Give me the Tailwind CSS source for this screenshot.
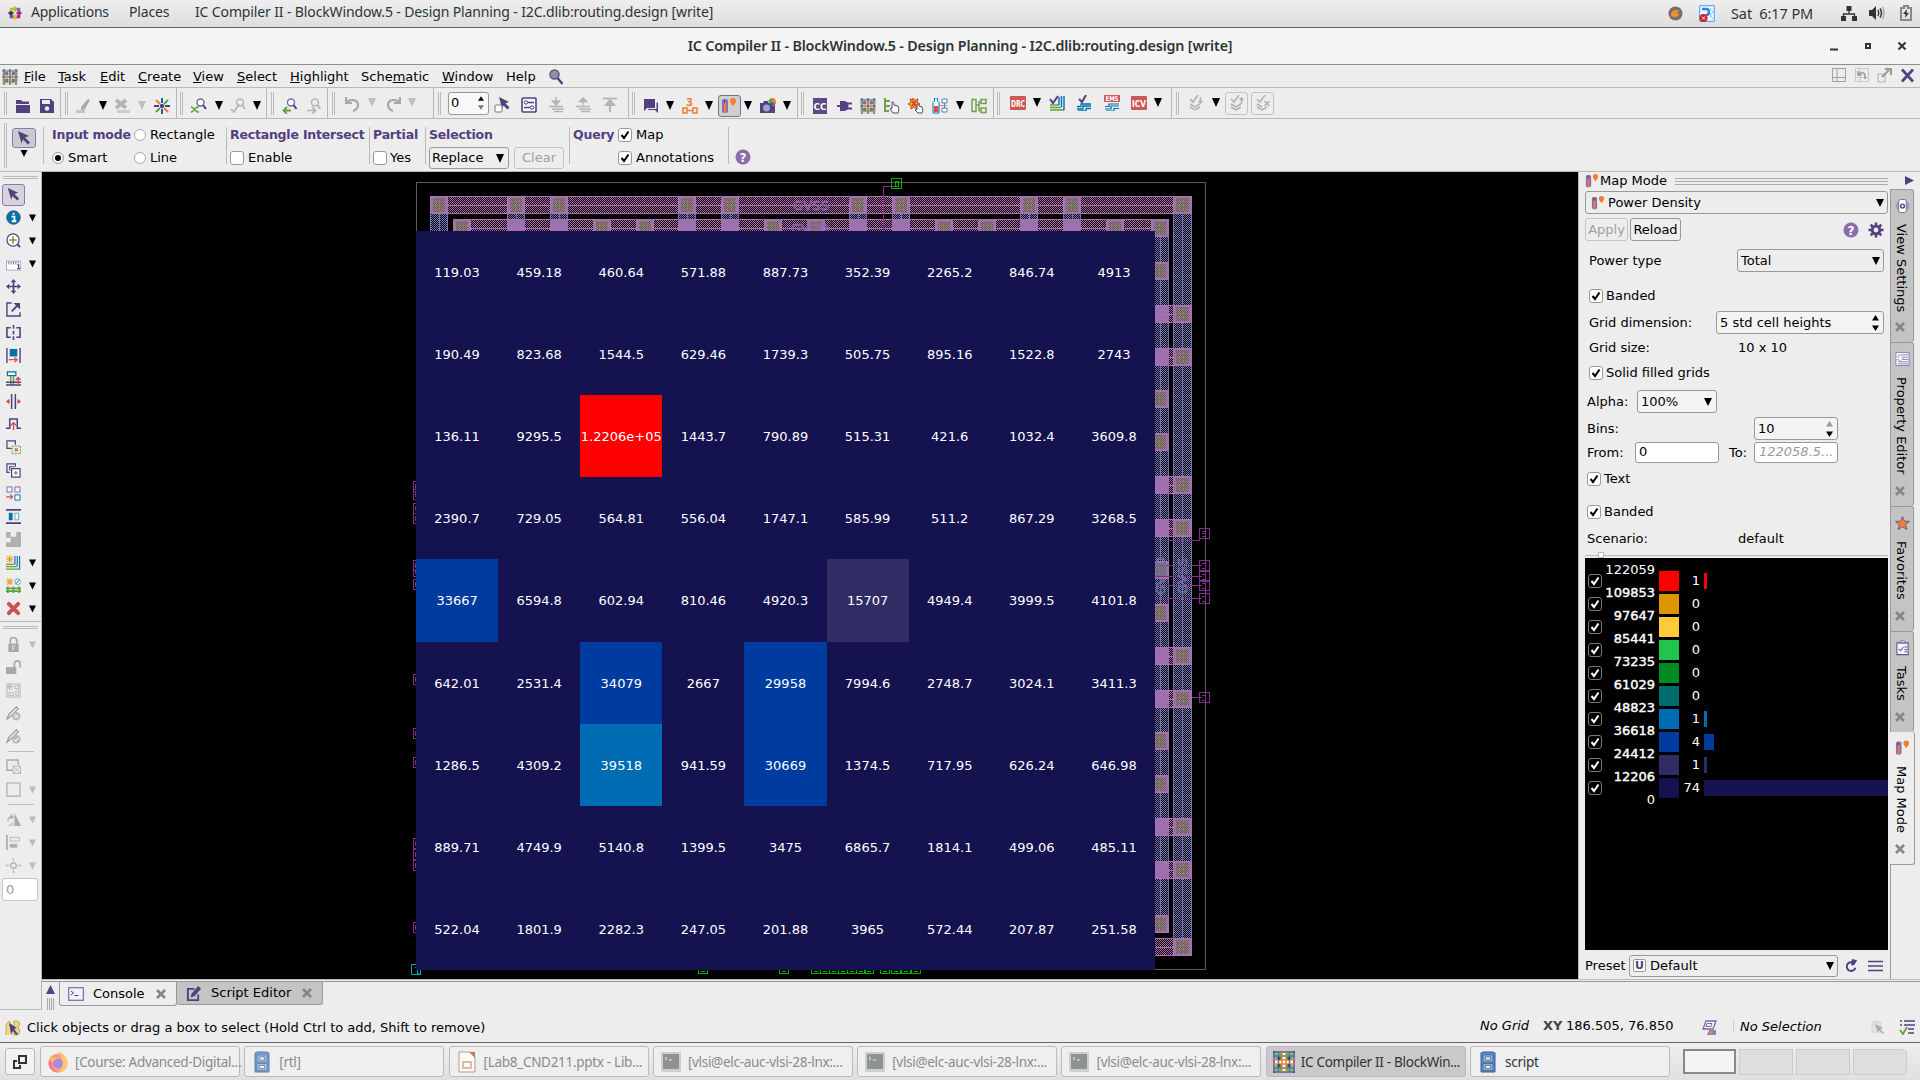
<!DOCTYPE html>
<html lang="en">
<head>
<meta charset="utf-8">
<title>IC Compiler II - BlockWindow.5</title>
<script src="https://cdn.jsdelivr.net/npm/@tailwindcss/browser@4"></script>
</head>
<body class="w-[1920px] h-[1080px] overflow-hidden bg-[#ededed] text-black text-[13px] leading-[16px] font-['DejaVu_Sans','Liberation_Sans',sans-serif] whitespace-nowrap">

<svg class="hidden">
  <symbol id="dn" viewBox="0 0 8 8"><path d="M0 0h8L4 8z" fill="currentColor"/></symbol>
  <symbol id="cursor" viewBox="0 0 16 16"><path d="M2 1l11 5-4 1.500 5 5-2 2-5-5-1.500 4z" fill="#53407f"/></symbol>
  <symbol id="folder" viewBox="0 0 16 16"><path d="M1 2h5l1.500 1.500H14V6H3L1 12z" fill="#53407f"/><path d="M1 7h14v8H1z" fill="#53407f"/><path d="M1 6.500h14" stroke="#ededed"/></symbol>
  <symbol id="save" viewBox="0 0 16 16"><path d="M1 1h11l3 3v11H1z" fill="#53407f"/><path d="M3 2h8v4H3z" fill="#ededed"/><circle cx="8" cy="10.500" r="2.300" fill="#ededed"/></symbol>
  <symbol id="pencil" viewBox="0 0 16 16"><path d="M5 9l7-8 2 1-5 9-4 2z" fill="#aaa"/><path d="M0 12h9v3H0z" fill="#c4c4c4"/></symbol>
  <symbol id="xgray" viewBox="0 0 16 16"><path d="M2 2l10 8M12 2L2 10" stroke="#b4b4b4" stroke-width="4"/><path d="M3 12h13v3H3z" fill="#ccc"/></symbol>
  <symbol id="burst" viewBox="0 0 16 16"><g stroke-width="2"><path d="M8 0v5M8 11v5" stroke="#0070b0"/><path d="M0 8h5M11 8h5" stroke="#53407f"/><path d="M2 2l4 4" stroke="#f08030"/><path d="M10 10l4 4" stroke="#f08030"/><path d="M14 2l-4 4M6 10l-4 4" stroke="#60a040"/></g><circle cx="8" cy="8" r="2.200" fill="#53407f"/></symbol>
  <symbol id="magg" viewBox="0 0 16 16"><circle cx="9.500" cy="4.500" r="3.500" fill="#fff" stroke="#7a68a0" stroke-width="1.400"/><path d="M12 7l3 4" stroke="#53407f" stroke-width="2"/><path d="M1 9l5 5M6 9l-5 5M0 8v2M0 13v2M7 8v2M7 13v2" stroke="#60a040" stroke-width="1.500"/></symbol>
  <symbol id="magx" viewBox="0 0 16 16"><circle cx="10" cy="4.500" r="3.500" fill="none" stroke="#b4b4b4" stroke-width="1.400"/><path d="M12 7l3 4M1 11l3 3 5-8" stroke="#b4b4b4" stroke-width="1.700" fill="none"/></symbol>
  <symbol id="magl" viewBox="0 0 16 16"><circle cx="9" cy="4.500" r="3.500" fill="#fff" stroke="#7a68a0" stroke-width="1.400"/><path d="M11.500 7l3 4" stroke="#53407f" stroke-width="2"/><path d="M2 12.500h7M5 9l-3.500 3.500L5 16" stroke="#60a040" stroke-width="1.800" fill="none"/></symbol>
  <symbol id="magr" viewBox="0 0 16 16"><circle cx="9" cy="4.500" r="3.500" fill="none" stroke="#b4b4b4" stroke-width="1.400"/><path d="M11.500 7l3 4M1 12.500h8M6 9l3.500 3.500L6 16" stroke="#b4b4b4" stroke-width="1.700" fill="none"/></symbol>
  <symbol id="undo" viewBox="0 0 16 16"><path d="M1 1v6h6M2 6c3-3 11-3 11 3 0 3-2 5-5 6" fill="none" stroke="#a8a8a8" stroke-width="2.200"/></symbol>
  <symbol id="redo" viewBox="0 0 16 16"><path d="M15 1v6H9M14 6C11 3 3 3 3 9c0 3 2 5 5 6" fill="none" stroke="#a8a8a8" stroke-width="2.200"/></symbol>
  <symbol id="selsq" viewBox="0 0 16 16"><path d="M5 0l10 5-3.500 1.500 4 4-2 2-4-4-1.500 3z" fill="#53407f"/><rect x="1" y="8" width="7" height="7" rx="1" fill="#fff" stroke="#777"/></symbol>
  <symbol id="sliders" viewBox="0 0 16 16"><rect x="1" y="1" width="14" height="14" rx="1" fill="#f6f4fa" stroke="#53407f" stroke-width="1.600"/><path d="M7 5.500h6M3 10.500h6" stroke="#53407f" stroke-width="1.500"/><circle cx="5" cy="5.500" r="1.700" fill="none" stroke="#53407f"/><circle cx="11" cy="10.500" r="1.700" fill="none" stroke="#53407f"/></symbol>
  <symbol id="lvd" viewBox="0 0 16 16"><path d="M8 0v5M4.500 4h7L8 8z" fill="#b4b4b4" stroke="#b4b4b4" stroke-width="1.500"/><path d="M1 9.500h14M4 12h12M6 14.500h9" stroke="#b4b4b4" stroke-width="1.600"/></symbol>
  <symbol id="lvu" viewBox="0 0 16 16"><path d="M8 8V3M4.500 4.500h7L8 1z" fill="#b4b4b4" stroke="#b4b4b4" stroke-width="1.500"/><path d="M1 9.500h14M4 12h12M6 14.500h9" stroke="#b4b4b4" stroke-width="1.600"/></symbol>
  <symbol id="lvt" viewBox="0 0 16 16"><path d="M8 15V6M4 8h8L8 3z" fill="#b4b4b4" stroke="#b4b4b4" stroke-width="2"/><path d="M1 1.500h14" stroke="#b4b4b4" stroke-width="1.800"/></symbol>
  <symbol id="chat" viewBox="0 0 16 16"><path d="M1 1h11v9H4l-3 3z" fill="#53407f"/><path d="M13.500 4.500H15V15l-3-3H5v-1h8.500z" fill="#53407f"/></symbol>
  <symbol id="three" viewBox="0 0 16 16"><text x="4" y="8" font-size="10" font-weight="bold" fill="#f08030">3</text><path d="M1 10h4v5H1zM11 10h4v5h-4zM5 12.500h6" fill="none" stroke="#f08030" stroke-width="1.500"/></symbol>
  <symbol id="map" viewBox="0 0 16 16"><rect x="1" y="1" width="6" height="14" rx="2" fill="#8a70b0"/><rect x="3" y="5" width="2" height="10" fill="#f08030"/><path d="M3.500 2v3" stroke="#53407f"/><path d="M12 0a3 3 0 0 1 3 3c0 2-3 5-3 5S9 5 9 3a3 3 0 0 1 3-3z" fill="#f08030"/></symbol>
  <symbol id="camera" viewBox="0 0 16 16"><path d="M0 5h3l1-2h4v2h7v10H0z" fill="#53407f"/><circle cx="6.500" cy="10" r="3.400" fill="#aaa0c4"/><path d="M12 0a4 4 0 0 1 0 8z" fill="#f08030"/><path d="M12 0a4 4 0 0 0-3 6l3-2z" fill="#60a040"/><path d="M9 6a4 4 0 0 0 6 0l-3-2z" fill="#0070b0"/></symbol>
  <symbol id="cc" viewBox="0 0 16 16"><path d="M1 0h14v16H1z" fill="#5b4a86"/><text x="1.500" y="12" font-size="9" font-weight="bold" fill="#fff" textLength="13" lengthAdjust="spacingAndGlyphs">CC</text></symbol>
  <symbol id="plug" viewBox="0 0 16 16"><path d="M1 8h4M10 5.500h6M10 10.500h6" stroke="#53407f" stroke-width="2"/><path d="M4 3h4c6 0 6 10 0 10H4z" fill="#53407f"/></symbol>
  <symbol id="chip" viewBox="0 0 16 16"><path d="M0 0h16v16H0z" fill="#e8d8c8"/><path d="M2 0v16M8 0v16M14 0v16" stroke="#3070a8" stroke-width="1.300"/><path d="M0 2h16M0 8h16" stroke="#3070a8"/><path d="M5 2v12M11 2v12M0 5h16M0 11h16" stroke="#e88030"/><path d="M3 13h10" stroke="#60a040"/><path d="M3 3h3v3H3zM10 3h3v3h-3zM3 10h3v3H3zM10 10h3v3h-3z" fill="#606070" opacity=".7"/></symbol>
  <symbol id="chipbig" viewBox="0 0 22 22"><path d="M0 0h22v22H0z" fill="#fff"/><path d="M1 0v22M21 0v22M0 1h22M0 21h22" stroke="#53407f" stroke-width="1.500"/><path d="M5.500 1v20M16.500 1v20M1 5h20M1 17h20" stroke="#1a78b8" stroke-width="1.500"/><path d="M9 1v20M13 1v20M1 9h20M1 13h20" stroke="#f08030" stroke-width="1.500"/><path d="M3 3h5v4H3zM14 3h5v4h-5zM3 15h5v4H3zM14 15h5v4h-5z" fill="none" stroke="#60a040" stroke-width="1.400"/><path d="M4.500 6h3v3h-3zM14.500 6h3v3h-3zM4.500 13h3v3h-3zM14.500 13h3v3h-3z" fill="#53407f"/></symbol>
  <symbol id="hand" viewBox="0 0 16 16"><path d="M1 0v14M1 3h5M1 8h5M1 13h4" stroke="#70a050" stroke-width="2" fill="none"/><path d="M8 4c1.500-.5 2 .5 2 3l4 1c1 2 1 5 0 7H9L6 11l2-.5z" fill="#fff" stroke="#53407f"/></symbol>
  <symbol id="bhand" viewBox="0 0 16 16"><path d="M5 0l1.500 2.500L10 1 9 4l3 2-3 1.500L9.500 11 6 9l-3 2 0-3.500L0 6l3-2L2 1l3 1z" fill="#f0b020" stroke="#d04020"/><path d="M4 3l4 5M8 3L4 8" stroke="#d04020" stroke-width="1.500"/><path d="M9 6c1.500-.5 2 .5 2 2l3 1c1 2 1 4 0 6h-4l-3-3 2-.5z" fill="#fff" stroke="#53407f"/></symbol>
  <symbol id="bottle" viewBox="0 0 16 16"><path d="M2.500 0h3v3l1.500 1.500V15H1V4.500L2.500 3z" fill="#fff" stroke="#0070b0"/><path d="M2 8h4.500v6H2z" fill="#d05050"/><path d="M10 1h5v4h-5zM10 10h5v4h-5zM12.500 5v5" fill="#fff" stroke="#3a8ac0"/><path d="M8 7.500h7" stroke="#f08030"/></symbol>
  <symbol id="gtree" viewBox="0 0 16 16"><path d="M1 1.500h4v12H1zM10 1.500h5v4h-5zM10 10h5v4.500h-5zM5 7h3M8 3.500h2M8 3.500v9h2" fill="none" stroke="#70a050" stroke-width="1.500"/></symbol>
  <symbol id="drc" viewBox="0 0 16 16"><rect x="0" y="1" width="16" height="14" rx="1" fill="#d05555"/><text x="1" y="11.500" font-size="8" font-weight="bold" fill="#fff" textLength="14" lengthAdjust="spacingAndGlyphs">DRC</text></symbol>
  <symbol id="icv" viewBox="0 0 16 16"><rect x="0" y="1" width="16" height="14" rx="1" fill="#d05555"/><text x="1" y="11.500" font-size="8" font-weight="bold" fill="#fff" textLength="14" lengthAdjust="spacingAndGlyphs">ICV</text></symbol>
  <symbol id="ems" viewBox="0 0 16 16"><rect x="0" y="0" width="16" height="7" rx="1" fill="#d05555"/><text x="1.500" y="6" font-size="6.500" font-weight="bold" fill="#fff" textLength="13" lengthAdjust="spacingAndGlyphs">EMS</text><path d="M1 14h6v-3h8M1 11.500h4V9h10M2 16h8v-2.500h5" fill="none" stroke="#0070b0" stroke-width="1.200"/></symbol>
  <symbol id="chk1" viewBox="0 0 16 16"><path d="M1 15h14M1 12.500h11M1 10h9" stroke="#60a040" stroke-width="1.400"/><path d="M15 1v14M12.500 1v11M10 2v8" stroke="#0070b0" stroke-width="1.400"/><path d="M1 4l3 4 5-7" fill="none" stroke="#53407f" stroke-width="2"/></symbol>
  <symbol id="chk2" viewBox="0 0 16 16"><path d="M1 14h6v-3h8M1 11.500h4V9h10M2 16h8v-2.500h5" fill="none" stroke="#0070b0" stroke-width="1.300"/><path d="M3 4l3 3 4-7" fill="none" stroke="#53407f" stroke-width="2"/></symbol>
  <symbol id="chkd" viewBox="0 0 16 16"><path d="M2 4l3 3 5-7M12.500 2v6M10.500 6l2 2 2-2M2 9l5 3 5-3M2 12l5 3 5-3" fill="none" stroke="#b0b0b0" stroke-width="1.500"/></symbol>
  <symbol id="chku" viewBox="0 0 16 16"><path d="M2 4l3 3 5-7M12.500 9V3M10.500 5l2-2 2 2M2 9l5 3 5-3M2 12l5 3 5-3" fill="none" stroke="#b0b0b0" stroke-width="1.500"/></symbol>
  <symbol id="chkx" viewBox="0 0 16 16"><path d="M2 4l3 3 5-7M9.500 6l5 5M14.500 6l-5 5M2 9l5 3M2 12l5 3 5-3" fill="none" stroke="#b0b0b0" stroke-width="1.500"/></symbol>
  <symbol id="help" viewBox="0 0 16 16"><circle cx="8" cy="8" r="7.500" fill="#8a6cab"/><text x="8" y="12.500" font-size="12" font-weight="bold" fill="#fff" text-anchor="middle">?</text></symbol>
  <symbol id="mag" viewBox="0 0 16 16"><circle cx="6.500" cy="5.500" r="4.500" fill="#9090a0" stroke="#655590" stroke-width="1.500"/><path d="M9.500 9l5 6" stroke="#53407f" stroke-width="2.400"/></symbol>
  <symbol id="close" viewBox="0 0 10 10"><path d="M1 1l8 8M9 1L1 9" stroke="#858585" stroke-width="2.600"/></symbol>

  <symbol id="info" viewBox="0 0 16 16"><circle cx="8" cy="8" r="7.300" fill="#0070a8" stroke="#53407f" stroke-width=".8"/><path d="M6 7h3v5M6 12h5M7 4h2" stroke="#fff" stroke-width="2" fill="none"/></symbol>
  <symbol id="zoom" viewBox="0 0 16 16"><circle cx="7.500" cy="7.500" r="6.500" fill="#fff" stroke="#53407f" stroke-width="1.300"/><path d="M7.500 3.500v8M3.500 7.500h8" stroke="#60a040" stroke-width="1.600"/><path d="M12 12l3 3" stroke="#53407f" stroke-width="2"/></symbol>
  <symbol id="ruler" viewBox="0 0 16 16"><rect x=".5" y="5.500" width="15" height="9.500" fill="#fff" stroke="#b0a4c4"/><path d="M3 6v3M5.500 6v3M8 6v3M10.500 6v3M13 6v2" stroke="#53407f" stroke-width=".8"/><path d="M12 9.500h1.500v4M12 13.500h3" stroke="#53407f" stroke-width="1.200" fill="none"/></symbol>
  <symbol id="move" viewBox="0 0 16 16"><path d="M8 2v12M2 8h12" stroke="#53407f" stroke-width="1.800"/><path d="M8 0l3 3.500H5zM8 16l3-3.500H5zM0 8l3.500-3v6zM16 8l-3.500-3v6z" fill="#53407f"/></symbol>
  <symbol id="resize" viewBox="0 0 16 16"><path d="M6 1H1v14h14v-4" fill="none" stroke="#53407f" stroke-width="1.500"/><path d="M6 10l6-6" stroke="#53407f" stroke-width="2"/><path d="M8 1h7v7z" fill="#53407f"/></symbol>
  <symbol id="mirror" viewBox="0 0 16 16"><path d="M5 3H1v10h4M11 3h4v10h-4" fill="none" stroke="#53407f" stroke-width="1.700"/><path d="M8 0v4M8 6v4M8 12v4" stroke="#53407f" stroke-width="1.700"/></symbol>
  <symbol id="snap" viewBox="0 0 16 16"><path d="M1 0v16M15 0v16" stroke="#53407f" stroke-width="1.500"/><path d="M4 1h8v8H4z" fill="#0070a8"/><path d="M3 12.500h9M9 10l3 2.500L9 15" fill="none" stroke="#d05050" stroke-width="1.300"/></symbol>
  <symbol id="via" viewBox="0 0 16 16"><path d="M1.500 1h9v4h-9z" fill="#fff" stroke="#0070a8" stroke-width="1.300"/><path d="M5 5v10M8 5v10" stroke="#60a040" stroke-width="1.600"/><path d="M0 12h16M0 15h16" stroke="#53407f" stroke-width="1.500"/><path d="M13 14V7M10.500 9.500L13 7l2.500 2.500" fill="none" stroke="#d05050" stroke-width="1.500"/></symbol>
  <symbol id="split" viewBox="0 0 16 16"><path d="M6 0v16M10 0v16" stroke="#53407f" stroke-width="1.600"/><path d="M4 8H1M12 8h3" stroke="#d05050" stroke-width="1.600"/><path d="M0 8l3.500-3v6zM16 8l-3.500-3v6z" fill="#d05050"/></symbol>
  <symbol id="jog" viewBox="0 0 16 16"><path d="M0 12h4V2h8v10h4" fill="none" stroke="#53407f" stroke-width="1.600"/><path d="M8 14V7M5 9l3-3 3 3" fill="none" stroke="#d05050" stroke-width="1.400"/></symbol>
  <symbol id="copyx" viewBox="0 0 16 16"><path d="M6 9H1V1h9v4" fill="none" stroke="#53407f" stroke-width="1.300"/><path d="M6.500 6.500h9v8h-9z" fill="none" stroke="#60a040" stroke-dasharray="2 1"/><path d="M9.500 9l3 3M12.500 9l-3 3" stroke="#d05050" stroke-width="1.200"/></symbol>
  <symbol id="copyp" viewBox="0 0 16 16"><path d="M4 10H1V1h9v3" fill="none" stroke="#53407f" stroke-width="1.300"/><path d="M6 6h9v9H6zM4 8V4h5" fill="#fff" stroke="#53407f" stroke-width="1.300"/><path d="M10.500 8.500v4M8.500 10.500h4" stroke="#60a040" stroke-width="1.300"/></symbol>
  <symbol id="spread" viewBox="0 0 16 16"><path d="M1 1h5.500v5.500H1zM9.500 1H15v5.500H9.500z" fill="#f6f4fa" stroke="#7a68a0"/><path d="M9.500 9.500H15V15H9.500z" fill="#fff" stroke="#0070a8"/><path d="M0 11.500h7M4.500 9L7 11.500 4.500 14" fill="none" stroke="#d05050" stroke-width="1.300"/></symbol>
  <symbol id="dist" viewBox="0 0 16 16"><path d="M0 1h16M0 15h16" stroke="#53407f" stroke-width="1.800"/><path d="M3 4h4v8H3z" fill="#0070a8"/><path d="M9.500 4.500h4v7h-4z" fill="#fff" stroke="#5aa0c8"/></symbol>
  <symbol id="poly" viewBox="0 0 16 16"><path d="M0 0h5v5h6V0h5v16H0v-5h5V6H0z" fill="#b0b0b0"/></symbol>
  <symbol id="newl" viewBox="0 0 16 16"><path d="M0 15h15M0 12.500h12M0 10h9" stroke="#60a040" stroke-width="1.300"/><path d="M14.500 1v14M12 1v11M9.500 1v9" stroke="#0070a8" stroke-width="1.200"/><path d="M4 0v9M0 4.500h8M1 1.500l6 6M7 1.500l-6 6" stroke="#f0a030" stroke-width="1.100"/></symbol>
  <symbol id="newr" viewBox="0 0 16 16"><path d="M0 11h16M0 14h16M2 9v7M8 9v7M14 9v7" stroke="#60a040" stroke-width="1.800"/><path d="M4 0v8M0 4h8M1 1l6 6M7 1L1 7" stroke="#f0a030" stroke-width="1.100"/><circle cx="12.500" cy="4" r="3" fill="#fff" stroke="#5aa0c8"/><path d="M11 6l3-4" stroke="#0070a8"/></symbol>
  <symbol id="del" viewBox="0 0 16 16"><path d="M3 3l10 10M13 3L3 13" stroke="#d05050" stroke-width="4.200" stroke-linecap="round"/></symbol>
  <symbol id="lock" viewBox="0 0 16 16"><path d="M4.500 7V4a3.500 3.500 0 0 1 7 0v3" fill="none" stroke="#a8a8a8" stroke-width="1.800"/><path d="M2.500 7h11v9h-11z" fill="#a8a8a8"/><path d="M7 14V9.500h3M7 12h2.500" stroke="#e0e0e0" fill="none"/></symbol>
  <symbol id="unlock" viewBox="0 0 16 16"><path d="M9 8V4a3 3 0 0 1 6 0v4" fill="none" stroke="#a8a8a8" stroke-width="1.800"/><path d="M0 7.500h11V15H0z" fill="#a8a8a8"/></symbol>
  <symbol id="plan" viewBox="0 0 16 16"><path d="M1 1h14v14H1z" fill="none" stroke="#b8b8b8"/><path d="M9.500 3h4v3h-4zM10.500 8.500h3v5h-3zM3 10.500h5v3H3zM4 0v8M0 4h8M1 1l6 6M7 1L1 7" fill="none" stroke="#b8b8b8"/></symbol>
  <symbol id="penx" viewBox="0 0 16 16"><path d="M1 14l2-5 8-8 2 2-8 8z" fill="#e8e8e8" stroke="#9a9a9a" stroke-width="1.300"/><circle cx="11" cy="11" r="4.500" fill="#b8b8b8"/><path d="M9 9l4 4M13 9l-4 4" stroke="#f0f0f0" stroke-width="1.300"/></symbol>
  <symbol id="penc" viewBox="0 0 16 16"><path d="M1 14l2-5 8-8 2 2-8 8z" fill="#e8e8e8" stroke="#9a9a9a" stroke-width="1.300"/><circle cx="11" cy="11" r="4.500" fill="#b8b8b8"/><path d="M8.500 11l2 2 3-4" stroke="#f0f0f0" stroke-width="1.300" fill="none"/></symbol>
  <symbol id="sqx" viewBox="0 0 16 16"><path d="M7 12H1V1h12v5" fill="none" stroke="#aaa" stroke-width="1.500"/><path d="M7.500 7.500h8v8h-8zM7.500 7.500l8 8M15.500 7.500l-8 8" fill="none" stroke="#b4b4b4"/></symbol>
  <symbol id="sq" viewBox="0 0 16 16"><path d="M1 1h14v14H1z" fill="none" stroke="#aaa" stroke-width="1.200"/></symbol>
  <symbol id="rot" viewBox="0 0 16 16"><path d="M9 1v14h7z" fill="#aaa"/><path d="M8 10v5H1z" fill="#d0d0d0"/><path d="M2 10c0-4 2-5 5-5M5 2.500L7.500 5 5 7.500" fill="none" stroke="#aaa" stroke-width="1.300"/></symbol>
  <symbol id="align" viewBox="0 0 16 16"><path d="M1 0v16" stroke="#aaa" stroke-width="1.800"/><path d="M4.500 2.500h10v4h-10z" fill="none" stroke="#b8b8b8"/><path d="M4 9.500h8v4H4z" fill="#b0b0b0"/></symbol>
  <symbol id="origin" viewBox="0 0 16 16"><circle cx="8" cy="8" r="3" fill="none" stroke="#b4b4b4" stroke-width="1.500"/><path d="M8 0v3M8 13v3M0 8h3M13 8h3" stroke="#b8b8b8" stroke-width="1.500"/></symbol>

  <symbol id="gear" viewBox="0 0 16 16"><path d="M8 .5v15M.5 8h15M2.700 2.700l10.600 10.600M13.300 2.700L2.700 13.300" stroke="#53407f" stroke-width="2.600"/><circle cx="8" cy="8" r="5.200" fill="#53407f"/><circle cx="8" cy="8" r="2.400" fill="#ededed"/></symbol>
  <symbol id="eye" viewBox="0 0 16 16"><ellipse cx="8" cy="8" rx="7.500" ry="6" fill="#a0a0b0"/><rect x="4" y="1" width="8" height="14" rx="2" fill="#fff" stroke="#7a68a0"/><circle cx="8" cy="8" r="2" fill="none" stroke="#53407f" stroke-width="1.500"/></symbol>
  <symbol id="prop" viewBox="0 0 16 16"><path d="M1 1h14v14H1z" fill="#fff" stroke="#8a7ab0"/><path d="M6 3.500h8M8 6h6M8 8.500h6M4 11h10M3 13.200h11" stroke="#8a7ab0"/><path d="M0 6h4V3l5 4.500L4 11V8.500H0z" fill="#fff" stroke="#8a7ab0" stroke-width=".7"/></symbol>
  <symbol id="star" viewBox="0 0 16 16"><path d="M8 1l2 5 5.500.3-4.200 3.500 1.500 5.200L8 12l-4.800 3 1.500-5.200L.5 6.300 6 6z" fill="#f08030" stroke="#6a5490"/></symbol>
  <symbol id="task" viewBox="0 0 16 16"><path d="M2 2.500h12v12.500H2z" fill="#f6f4fa" stroke="#6a5490" stroke-width="1.200"/><path d="M5 2.500c0-3 6-3 6 0z" fill="#fff" stroke="#6a5490"/><path d="M4 9l2 2 3-4M10 7h3M10 9.500h3M10 12h3" fill="none" stroke="#6a5490" stroke-width="1.100"/></symbol>
  <symbol id="reload" viewBox="0 0 16 16"><path d="M11 4.500A5 5 0 1 0 13 10" fill="none" stroke="#53407f" stroke-width="2.200"/><path d="M9 0l6 1.500L11.500 7H8z" fill="#53407f"/></symbol>
  <symbol id="term" viewBox="0 0 16 16"><rect x=".7" y="1.700" width="14.600" height="12.600" fill="#f2f0f8" stroke="#7a68a0" stroke-width="1.200"/><path d="M3 5l2.500 2L3 9M6.500 9.500h4" fill="none" stroke="#53407f"/></symbol>
  <symbol id="edit" viewBox="0 0 16 16"><path d="M9 3H2v12h11V9" fill="none" stroke="#53407f" stroke-width="2"/><path d="M5 12l1-4 7-8 3 3-7 8z" fill="#53407f"/></symbol>
  <symbol id="xterm" viewBox="0 0 22 22"><rect x="1" y="1" width="20" height="20" rx="1" fill="#c4c8c4"/><rect x="3" y="3" width="16" height="15" fill="#777c79"/><path d="M5 6l2 1.500L5 9M9 9h3" stroke="#eee" fill="none"/></symbol>
  <symbol id="cab" viewBox="0 0 22 22"><path d="M4 2l2-1h10l2 1v19H4z" fill="#5a8cc8" stroke="#36609c"/><path d="M6 4h10v7H6zM6 12.500h10v7H6z" fill="#8ab4e4" stroke="#36609c" stroke-width=".7"/><path d="M8.500 6h5v3h-5zM8.500 14.500h5v3h-5z" fill="#f2f2f2" stroke="#555" stroke-width=".7"/></symbol>
  <symbol id="ff" viewBox="0 0 22 22"><circle cx="11" cy="12" r="9.500" fill="#ff8a5a"/><path d="M2 9a9.500 9.500 0 0 0 9 12.500c-3-2-7-4-6-11z" fill="#ff5a7a"/><path d="M11 0c6 3 10 7 9.500 13C20 18 16 21 11 21 16 19 18 10 11 0z" fill="#ffc04a"/><circle cx="11" cy="12.500" r="4.800" fill="#9070e0"/><path d="M3 5c2 2 5 1 7 3-3 0-4 2-5 4z" fill="#ffb050"/></symbol>
  <symbol id="impress" viewBox="0 0 22 22"><path d="M3 1h11l5 5v15H3z" fill="#fff" stroke="#b08070"/><path d="M13 1h6v6z" fill="#b06040"/><path d="M6 10h10v8H6z" fill="#e8a890"/><path d="M8 12h6v4H8z" fill="#fff"/></symbol>
</svg>

<div class="flex flex-col w-[1920px] h-[1080px]">
  <!-- desktop top bar -->
  <header class="h-7 shrink-0 flex items-center bg-linear-to-b from-[#eeeeee] to-[#dedede] border-b border-[#666] text-[#2e3436] text-[14px] font-['Noto_Sans',sans-serif]">
    <svg class="w-[14px] h-[14px] ml-2 mb-px shrink-0" viewBox="0 0 16 16"><path d="M8 0l3 3-3 4-3-4z" fill="#9c3"/><path d="M16 8l-3 3-4-3 4-3z" fill="#93307a"/><path d="M8 16l-3-3 3-4 3 4z" fill="#eb2"/><path d="M0 8l3-3 4 3-4 3z" fill="#336"/><path d="M2 2h4v4H2z" fill="#ea4"/><path d="M10 2h4v4h-4z" fill="#86a"/><path d="M2 10h4v4H2z" fill="#55a"/><path d="M10 10h4v4h-4z" fill="#a36"/></svg>
    <span class="w-[98px] ml-[9px] pb-[3px] tracking-[-0.22px]">Applications</span>
    <span class="w-[66px] pb-[3px] tracking-[-0.15px]">Places</span>
    <span class="w-[1480px] pb-[3px] tracking-[-0.13px]">IC Compiler II - BlockWindow.5 - Design Planning - I2C.dlib:routing.design [write]</span>
    <span class="flex items-center absolute left-[1668px] top-0 h-[26px]">
      <svg class="w-[15px] h-[15px]" viewBox="0 0 16 16"><circle cx="8" cy="8" r="7.500" fill="#77706a"/><path d="M3 9c1-5 7-6 9-3-2 0-3 1-3 2h3c0 3-5 5-8 3z" fill="#f09030"/></svg>
      <svg class="w-4 h-[17px] ml-4" viewBox="0 0 16 17"><path d="M.7.700h14.600v15.600H.7z" fill="#eef6ff" stroke="#4a9cf0"/><path d="M3 4h4c4 0 4 6 0 6" fill="none" stroke="#2a88e8" stroke-width="2.500"/><path d="M11 3l3 4-3 3 3 4" fill="none" stroke="#8bc0f4"/><circle cx="4.500" cy="13" r="4" fill="#d02020"/><path d="M3 11.500l3 3M6 11.500l-3 3" stroke="#fff"/></svg>
      <span class="ml-4 w-[110px] pb-px text-[14.500px] tracking-[-0.1px] whitespace-pre">Sat  6:17 PM</span>
      <svg class="w-4 h-4 shrink-0" viewBox="0 0 16 16" fill="#2e3436"><path d="M5.500 1h5v5h-5zM0 11h5v5H0zM11 11h5v5h-5z"/><path d="M8 5v4M2.500 12V9h11v3" fill="none" stroke="#2e3436" stroke-width="1.300"/></svg>
      <svg class="w-4 h-4 shrink-0 ml-3" viewBox="0 0 16 16"><path d="M0 5h3l4-4v14l-4-4H0z" fill="#2e3436"/><path d="M9 5c1 2 1 4 0 6M11 3.500c2 3 2 6 0 9" fill="none" stroke="#2e3436" stroke-width="1.500"/><path d="M13.500 2c2 4 2 8 0 12" fill="none" stroke="#aaa" stroke-width="1.500"/></svg>
      <svg class="w-3 h-4 shrink-0 ml-[15px]" viewBox="0 0 12 16"><path d="M1 3h3V1h4v2h3v12H1z" fill="none" stroke="#888" stroke-width="2"/><path d="M7 4L3 9h2.500L5 13l4-5H6.500z" fill="#2e3436"/></svg>
    </span>
  </header>

  <!-- window title -->
  <div class="h-[37px] shrink-0 relative flex items-center justify-center bg-[#f4f4f4] border-b border-[#8f9088] text-[#2e3436] font-semibold text-[14.300px] tracking-[-0.17px] font-['Noto_Sans',sans-serif]">
    <span class="pb-px">IC Compiler II - BlockWindow.5 - Design Planning - I2C.dlib:routing.design [write]</span>
    <svg class="absolute left-[1828px] top-[10px] w-20 h-4" viewBox="0 0 80 16"><path d="M2 11.500h8" stroke="#2e3436" stroke-width="2"/><path d="M38 6h4v4h-4z" fill="none" stroke="#2e3436" stroke-width="2"/><path d="M70.500 4.500l7 7M77.500 4.500l-7 7" stroke="#2e3436" stroke-width="2"/></svg>
  </div>

  <!-- menu bar -->
  <nav class="h-[23px] shrink-0 relative flex items-center border-b border-[#b8b8b8] pt-px">
    <svg class="w-4 h-4 ml-[2px] mr-[6px]"><use href="#chip"/></svg>
    <span class="w-[34px]"><u>F</u>ile</span><span class="w-[42px]"><u>T</u>ask</span><span class="w-[38px]"><u>E</u>dit</span><span class="w-[55px]"><u>C</u>reate</span><span class="w-[44px]"><u>V</u>iew</span><span class="w-[53px]"><u>S</u>elect</span><span class="w-[71px]"><u>H</u>ighlight</span><span class="w-[81px]">Sche<u>m</u>atic</span><span class="w-[64px]"><u>W</u>indow</span><span class="w-[42px]">Help</span>
    <svg class="w-4 h-4"><use href="#mag"/></svg>
    <svg class="absolute left-[1832px] top-[3px] w-[84px] h-[15px]" viewBox="0 0 84 15"><path d="M.5.500h13v13H.5zM5 .5v13M.5 9.500h13" fill="none" stroke="#a0a0a0"/><path d="M23.500.500h13v13h-13zM28 .5v13M23.500 9.500h13" fill="none" stroke="#c8c8c8"/><path d="M26 3v4h4M27 6c3-3 7-1 6 5" fill="none" stroke="#999" stroke-width="1.600"/><path d="M46 6h7v8h-7z" fill="none" stroke="#b0b0b0"/><path d="M50 9l7-7M53 1h6v6" fill="none" stroke="#999" stroke-width="2"/><path d="M70 1.500l11 12M81 1.500l-11 12" stroke="#53407f" stroke-width="2.700"/></svg>
  </nav>

  <!-- icon toolbar, filled from data -->
  <div id="tools" class="h-[31px] shrink-0 flex items-center border-b border-[#b8b8b8]"></div>

  <!-- selection options -->
  <div class="h-[53px] shrink-0 flex items-start border-b border-[#b8b8b8]">
    <div class="ml-1 mt-1 h-[45px] w-[3px] border-x border-[#bbb]"></div>
    <div class="ml-[5px] mt-[9px] flex flex-col items-center w-6">
      <span class="w-6 h-5 rounded-[3px] border border-[#8a7ab0] bg-[#c8cccf] flex items-center justify-center"><svg class="w-4 h-4"><use href="#cursor"/></svg></span>
      <svg class="w-2 h-[7px] mt-[2px]"><use href="#dn"/></svg>
    </div>
    <div class="ml-[7px] mt-2 w-px h-[37px] bg-[#bbb]"></div>
    <div class="ml-2 mt-2 w-[82px] flex flex-col gap-[7px]">
      <b class="text-[#53407f] text-[12.500px] tracking-[-0.2px]">Input mode</b>
      <span class="flex items-center gap-1"><i class="w-3 h-3 rounded-full border border-[#999] bg-white flex items-center justify-center"><i class="w-[6px] h-[6px] rounded-full bg-black"></i></i>Smart</span>
    </div>
    <div class="mt-2 w-[92px] flex flex-col gap-[7px]">
      <span class="flex items-center gap-1"><i class="w-3 h-3 rounded-full border border-[#aaa] bg-white"></i>Rectangle</span>
      <span class="flex items-center gap-1"><i class="w-3 h-3 rounded-full border border-[#aaa] bg-white"></i>Line</span>
    </div>
    <div class="mt-2 w-px h-[37px] bg-[#bbb]"></div>
    <div class="ml-[3px] mt-2 w-[139px] flex flex-col gap-[7px]">
      <b class="text-[#53407f] text-[12.500px] tracking-[-0.2px]">Rectangle Intersect</b>
      <span class="flex items-center gap-1"><i class="w-[14px] h-[14px] rounded-[3px] border border-[#999] bg-white"></i>Enable</span>
    </div>
    <div class="mt-2 w-px h-[37px] bg-[#bbb]"></div>
    <div class="ml-[3px] mt-2 w-[52px] flex flex-col gap-[7px]">
      <b class="text-[#53407f] text-[12.500px] tracking-[-0.2px]">Partial</b>
      <span class="flex items-center gap-[3px]"><i class="w-[14px] h-[14px] rounded-[3px] border border-[#999] bg-white"></i>Yes</span>
    </div>
    <div class="mt-2 w-px h-[37px] bg-[#bbb]"></div>
    <div class="ml-[3px] mt-2 w-[140px] flex flex-col gap-1">
      <b class="text-[#53407f] text-[12.500px] tracking-[-0.2px]">Selection</b>
      <span class="flex gap-[5px]"><span class="w-[80px] h-[22px] rounded-[3px] border border-[#999] flex items-center justify-between pl-[2px] pr-1">Replace<svg class="w-2 h-[9px]" viewBox="0 0 8 8" preserveAspectRatio="none"><path d="M0 0h8L4 8z"/></svg></span><span class="w-[50px] h-[22px] rounded-[3px] border border-[#c4c4c4] flex items-center justify-center text-[#a0a0a0]">Clear</span></span>
    </div>
    <div class="mt-2 w-px h-[37px] bg-[#bbb]"></div>
    <b class="ml-[3px] mt-2 w-[45px] text-[#53407f] text-[12.500px] tracking-[-0.2px]">Query</b>
    <div class="mt-2 w-[110px] flex flex-col gap-[7px]">
      <span class="flex items-center gap-1"><i data-check></i>Map</span>
      <span class="flex items-center gap-1"><i data-check></i>Annotations</span>
    </div>
    <div class="mt-2 w-px h-[37px] bg-[#bbb]"></div>
    <svg class="w-4 h-4 mt-[30px] ml-[6px]"><use href="#help"/></svg>
  </div>

  <!-- work area -->
  <div class="h-[838px] shrink-0 flex">
    <aside class="w-[42px] shrink-0 h-[838px] border-r border-b border-[#b8b8b8]">
      <div class="mx-[3px] mt-1 h-[3px] border-y border-[#bbb]"></div>
      <div id="side1" class="mt-1"></div>
      <div class="h-px mt-[1px] bg-[#b8b8b8]"></div>
      <div class="mx-[3px] mt-1 h-[3px] border-y border-[#bbb]"></div>
      <div id="side2" class="mt-[4px]"></div>
      <div class="ml-2 w-[26px] h-px mt-[3px] bg-[#bbb]"></div>
      <div id="side3" class="mt-[3px]"></div>
      <div class="ml-2 w-[26px] h-px mt-[3px] bg-[#bbb]"></div>
      <div id="side4" class="mt-[3px]"></div>
      <div class="ml-[2px] mt-px w-9 h-[23px] rounded-[3px] border border-[#c4c4c4] bg-white pl-[3px] pt-[3px] text-[#999]">0</div>
    </aside>

    <div class="w-[1878px] flex flex-col">
      <div class="h-[808px] flex border-b border-[#bbb]">
        <main class="relative w-[1536px] h-[807px] bg-black overflow-hidden">
          <svg id="layout" class="block" width="1536" height="807" viewBox="42 172 1536 807" shape-rendering="crispEdges">
            <defs>
              <pattern id="pp" width="2" height="2" patternUnits="userSpaceOnUse"><path d="M0 0h1v1H0zM1 1h1v1H1z" fill="#a868a8"/></pattern>
              <pattern id="pb" width="2" height="2" patternUnits="userSpaceOnUse"><path d="M0 0h1v1H0zM1 1h1v1H1z" fill="#7878b4"/></pattern>
              <pattern id="pm" width="2" height="2" patternUnits="userSpaceOnUse"><path d="M0 0h2v2H0z" fill="#a46eae"/><path d="M0 0h1v1H0z" fill="#8878b4"/></pattern>
              <pattern id="pg" width="4" height="4" patternUnits="userSpaceOnUse"><path d="M0 0h1v1H0zM2 0h1v1H2zM0 2h1v1H0zM1 3h1v1H1zM3 3h1v1H3zM2 2h1v1H2zM1 1h1v1H1z" fill="#507018"/></pattern>
            </defs>
          </svg>
          <div id="heat" class="absolute left-[374px] top-[59px] w-[739px] h-[739px] grid grid-cols-9 grid-rows-9 bg-[#14124f] text-white"></div>
        </main>

        <!-- map mode panel -->
        <section class="w-[312px] shrink-0 border-l border-[#b8b8b8] pl-[6px] flex flex-col">
          <div class="h-4 mt-[1px] flex items-center"><svg class="w-[14px] h-4"><use href="#map"/></svg><span class="ml-px w-[75px]">Map Mode</span><span class="w-[213px] h-[7px] border-y border-[#aaa] flex items-center"><i class="block w-full h-px bg-[#aaa]"></i></span></div>
          <div class="mt-[2px] w-[303px] h-[23px] rounded-[3px] border border-[#999] flex items-center pl-[5px] pr-[3px]"><svg class="w-[14px] h-4"><use href="#map"/></svg><span class="grow ml-[3px]">Power Density</span><svg class="w-2 h-2"><use href="#dn"/></svg></div>
          <div class="mt-[4px] flex items-center h-[23px]"><span class="w-[43px] h-[23px] rounded-[3px] border border-[#c4c4c4] text-[#a0a0a0] flex items-center justify-center">Apply</span><span class="ml-[2px] w-[51px] h-[23px] rounded-[3px] border border-[#999] flex items-center justify-center">Reload</span><svg class="w-4 h-4 ml-[162px]"><use href="#help"/></svg><svg class="w-4 h-4 ml-[9px]"><use href="#gear"/></svg></div>
          <div class="mt-[8px] h-[23px] flex items-center"><span class="pl-1 w-[152px]">Power type</span><span class="w-[147px] h-[23px] rounded-[3px] border border-[#999] flex items-center justify-between pl-[3px] pr-[3px]">Total<svg class="w-2 h-2"><use href="#dn"/></svg></span></div>
          <div class="mt-[16px] h-4 flex items-center gap-[3px] pl-1"><i data-check></i>Banded</div>
          <div class="mt-[7px] h-[23px] flex items-center"><span class="pl-1 w-[131px]">Grid dimension:</span><span class="w-[168px] h-[23px] rounded-[3px] border border-[#999] flex items-center justify-between pl-[3px] pr-[4px] bg-[#f4f4f4]">5 std cell heights<svg class="w-[7px] h-4" viewBox="0 0 7 16"><path d="M0 5.500L3.500 0 7 5.500zM0 10.500L3.500 16 7 10.500z"/></svg></span></div>
          <div class="mt-[6px] h-4 flex items-center"><span class="pl-1 w-[153px]">Grid size:</span>10 x 10</div>
          <div class="mt-[9px] h-4 flex items-center gap-[3px] pl-1"><i data-check></i>Solid filled grids</div>
          <div class="mt-[9px] h-[23px] flex items-center"><span class="pl-[2px] w-[52px]">Alpha:</span><span class="w-20 h-[23px] rounded-[3px] border border-[#999] bg-[#f4f4f4] flex items-center justify-between pl-[3px] pr-[4px]">100%<svg class="w-2 h-2"><use href="#dn"/></svg></span></div>
          <div class="mt-[4px] h-[23px] flex items-center"><span class="pl-[2px] w-[169px]">Bins:</span><span class="w-[84px] h-[23px] rounded-[3px] border border-[#999] bg-[#f4f4f4] flex items-center justify-between pl-[3px] pr-[4px]">10<svg class="w-[7px] h-4" viewBox="0 0 7 16"><path d="M0 5.500L3.500 0 7 5.500z" fill="#999"/><path d="M0 10.500L3.500 16 7 10.500z"/></svg></span></div>
          <div class="mt-[2px] h-[21px] flex items-center"><span class="pl-[2px] w-[50px]">From:</span><span class="w-[84px] h-[21px] rounded-[3px] border border-[#999] bg-white pl-[3px] pt-px">0</span><span class="w-[35px] pl-[10px]">To:</span><span class="w-[84px] h-[21px] rounded-[3px] border border-[#999] bg-white pl-1 pt-px italic text-[#999]">122058.5...</span></div>
          <div class="mt-[8px] h-4 flex items-center gap-[3px] pl-[2px]"><i data-check></i>Text</div>
          <div class="mt-[17px] h-4 flex items-center gap-[3px] pl-[2px]"><i data-check></i>Banded</div>
          <div class="mt-[11px] h-4 flex items-center"><span class="pl-[2px] w-[153px]">Scenario:</span>default</div>
          <div class="mt-[5px] h-[6px] w-[303px] flex items-center"><i class="w-[13px] h-px bg-[#bbb]"></i><i class="w-[6px] h-[6px] border border-[#bbb] bg-white"></i><i class="grow h-px bg-[#bbb]"></i></div>
          <div class="w-[303px] h-[392px] bg-black text-white flex overflow-hidden">
            <div id="hchk" class="w-[17px] pl-[3px] pt-[12px]"></div>
            <div id="hlab" class="w-[53px] text-right pt-1"></div>
            <div id="hrow" class="pl-1 pt-[13px]"></div>
          </div>
          <div class="mt-[4px] h-[23px] flex items-center"><span class="w-[44px]">Preset</span><span class="w-[209px] h-[22px] rounded-[3px] border border-[#999] flex items-center pl-[3px] pr-[3px]"><span class="w-[13px] h-[13px] rounded-[2px] border border-[#999] bg-white text-[#53407f] font-bold text-[11px] leading-[11px] text-center">U</span><span class="grow ml-1">Default</span><svg class="w-2 h-2"><use href="#dn"/></svg></span><svg class="w-[14px] h-[14px] ml-[6px]"><use href="#reload"/></svg><svg class="w-[15px] h-3 ml-[10px]" viewBox="0 0 15 12"><path d="M0 1.500h15M0 6h15M0 10.500h15" stroke="#53407f" stroke-width="1.700"/></svg></div>
        </section>

        <!-- dock tabs -->
        <div class="w-[30px] shrink-0 relative flex flex-col">
          <div class="h-[17px] flex items-center pl-[15px]"><svg class="w-[9px] h-[9px]" viewBox="0 0 9 9"><path d="M0 0l9 4.500L0 9z" fill="#53407f"/></svg></div>
          <div id="docks" class="flex flex-col"></div>
          <div class="grow border-l border-[#999]"></div>
        </div>
      </div>

      <!-- bottom tabs -->
      <div class="h-[30px] flex relative border-t border-[#999] mt-px">
        <div class="w-[17px] flex flex-col items-center pt-[3px]"><svg class="w-[9px] h-[9px]" viewBox="0 0 9 9"><path d="M4.500 0L9 9H0z" fill="#53407f"/></svg><span class="mt-1 w-[7px] h-3 border-x border-[#aaa] flex justify-around"><i class="w-px bg-[#aaa]"></i><i class="w-px bg-[#aaa]"></i></span></div>
        <div class="w-[118px] h-[24px] border-x border-b border-[#999] rounded-b-[3px] flex items-center pl-2"><svg class="w-4 h-4"><use href="#term"/></svg><span class="ml-[9px] w-[63px]">Console</span><svg class="w-[10px] h-[10px]"><use href="#close"/></svg></div>
        <div class="w-[146px] h-[23px] border-r border-b border-[#999] rounded-b-[3px] bg-[#c4c4c4] flex items-center pl-[9px]"><svg class="w-[15px] h-[15px]"><use href="#edit"/></svg><span class="ml-[10px] w-[91px]">Script Editor</span><svg class="w-[10px] h-[10px]"><use href="#close"/></svg></div>
      </div>
    </div>
  </div>

  <!-- status line -->
  <div class="h-8 shrink-0 flex items-center relative">
    <svg class="w-4 h-4 ml-[5px] mt-[3px]" viewBox="0 0 16 16"><path d="M1 15V5l3-4 3 4v10M9 1h4l2 3-2 3 2 4-2 4H9z" fill="#e8d890" stroke="#c8a840"/><path d="M4 3l8 5-3 1 4 5-2 1-3-4-2 3z" fill="#53407f"/></svg>
    <span class="ml-[6px] w-[1453px] pt-[4px]">Click objects or drag a box to select (Hold Ctrl to add, Shift to remove)</span>
    <span class="w-[63px] italic">No Grid</span>
    <b class="w-[23px] text-[#444]">XY</b>
    <span class="w-[135px]">186.505, 76.850</span>
    <svg class="w-4 h-4 mt-[3px]" viewBox="0 0 16 16"><path d="M5 1h10l-3 8H2z" fill="#f6f4fa" stroke="#7a68a0" stroke-width="1.300"/><path d="M6 3.500h5l-1 3H5z" fill="none" stroke="#7a68a0"/><path d="M8 10h7v5H6z" fill="#88a"/><circle cx="10" cy="12.500" r="1.500" fill="#f08030"/></svg>
    <i class="ml-4 mr-[6px] w-px h-[14px] bg-[#ccc]"></i>
    <span class="w-[130px] italic pt-[2px]">No Selection</span>
    <svg class="w-4 h-4 mt-[2px]" viewBox="0 0 16 16"><path d="M2 3h9v10H2zM5 1v4" fill="#e2e2e2" stroke="#d4d4d4"/><path d="M5 5l8 4-3 1 4 4-1 1-4-4-1 3z" fill="#a8a8a8"/></svg>
    <svg class="w-4 h-4 ml-[13px] mt-[2px]" viewBox="0 0 16 16"><path d="M1 2h2M5 2h11M1 6h2M5 6h11M9 10h6M9 14h6" stroke="#53407f" stroke-width="1.700"/><path d="M1 11l3 4 4-7" fill="none" stroke="#60a040" stroke-width="1.800"/></svg>
  </div>

  <!-- task list -->
  <footer class="h-[38px] shrink-0 border-t border-[#666] bg-linear-to-b from-[#eeeeee] to-[#e0e0e0] flex items-center text-[13.500px] font-['Noto_Sans',sans-serif] text-[#2e3436]">
    <span class="ml-[5px] w-[30px] h-[27px] rounded-[3px] border border-[#bbb] bg-[#f2f2f2] flex items-center justify-center"><svg class="w-[14px] h-[14px]" viewBox="0 0 14 14"><path d="M6 1h7v7H6z" fill="none" stroke="#2e3436" stroke-width="2"/><path d="M4 6H1v7h6v-3" fill="none" stroke="#2e3436" stroke-width="2"/></svg></span>
    <div id="tasks" class="ml-[5px] flex gap-[4.300px]"></div>
    <div class="ml-[13px] flex gap-[3px] items-center"><i class="w-[53px] h-[25px] border-2 border-[#888] bg-[#f6f5f3]"></i><i class="w-[54px] h-[26px] border border-[#ccc] bg-[#dedede]"></i><i class="w-[54px] h-[26px] border border-[#ccc] bg-[#dedede]"></i><i class="w-[54px] h-[26px] border border-[#ccc] bg-[#dedede] rounded-r-[4px]"></i></div>
  </footer>
</div>

<script>
const $ = id => document.getElementById(id);
const icon = (n, c = 'w-4 h-4') => `<svg class="${c} shrink-0"><use href="#${n}"/></svg>`;

document.querySelectorAll('[data-check]').forEach(e => {
  e.className = 'block w-[14px] h-[14px] rounded-[3px] border border-[#999] bg-white shrink-0';
  e.innerHTML = '<svg class="block w-3 h-3" viewBox="0 0 12 12"><path d="M2.500 6l2.500 3 4.500-6.500" fill="none" stroke="#000" stroke-width="2"/></svg>';
});

// toolbar: [kind, centre x, vertical nudge]
const T = [['|h',5],['folder',23],['save',47],['|',60],['|h',66],['pencil',84],['v',103],['xgray',122],['vg',142],['burst',162],['|',176],['|h',181],['magg',199],['v',219],['magx',238],['v',257],['|',266],['|h',272],['magl',290],['magr',314],['|',327],['|h',333],['undo',353,-4],['vg',372,-6],['redo',393,-4],['vg',412,-6],['|',433],['|h',439],['spin',468.500],['selsq',502,-1],['sliders',529,-2],['lvd',556,-2],['lvu',583,-2],['lvt',610,-2],['|',628],['|h',633],['chat',651],['v',670],['three',690],['v',709],['bmap',729],['v',748],['camera',768],['v',787],['|',797],['|h',802],['cc',820],['plug',844],['chip',868],['hand',892],['bhand',916],['bottle',940],['v',960],['gtree',979],['|',993],['|h',998],['drc',1018,-6],['v',1037,-6],['chk1',1057,-6],['chk2',1084,-6],['ems',1112,-6],['icv',1139,-6],['v',1158,-6],['|',1171],['|h',1177],['chkd',1196,-6],['v',1216,-6],['bu',1236.500],['bx',1262.500]];
let cur = 0;
$('tools').innerHTML = T.map(([k, x, dy = 0]) => {
  let w = 16, b;
  if (k === '|') { w = 1; b = '<i class="block w-px h-[30px] bg-[#b8b8b8]"></i>'; }
  else if (k === '|h') { w = 3; b = '<i class="block w-[3px] h-[23px] border-x border-[#bbb]"></i>'; }
  else if (k === 'v') { w = 8; b = `<svg class="block w-2 h-[9px] mt-1 text-black" viewBox="0 0 8 8" preserveAspectRatio="none"><path d="M0 0h8L4 8z"/></svg>`; }
  else if (k === 'vg') { w = 8; b = `<svg class="block w-2 h-[9px] mt-1" viewBox="0 0 8 8" preserveAspectRatio="none"><path d="M0 0h8L4 8z" fill="#c0c0c0"/></svg>`; }
  else if (k === 'spin') { w = 41; b = '<span class="flex w-[41px] h-[23px] rounded-[3px] border border-[#999] bg-[#f8f8f8] items-center justify-between pl-[2px] pr-1">0<svg class="w-[6px] h-4" viewBox="0 0 7 16"><path d="M0 5.500L3.500 0 7 5.500z"/><path d="M0 10.500L3.500 16 7 10.500z" fill="#777"/></svg></span>'; }
  else if (k === 'bmap') { w = 23; b = `<span class="flex w-[23px] h-[22px] mt-[5px] rounded-[3px] border border-[#7a7090] bg-[#cfcfd2] items-center justify-center">${icon('map')}</span>`; }
  else if (k === 'bu' || k === 'bx') { w = 23; b = `<span class="flex w-[23px] h-[23px] rounded-[3px] border border-[#c4c4c4] items-center justify-center">${icon(k === 'bu' ? 'chku' : 'chkx')}</span>`; }
  else b = icon(k, 'block w-4 h-4 mt-[5px]');
  const left = x - w / 2, m = left - cur; cur = left + w;
  return `<span class="shrink-0" style="margin-left:${m}px;width:${w}px;padding-bottom:${-dy}px">${b}</span>`;
}).join('');

// side tool rows: name, arrow state
const side = (id, list) => $(id).innerHTML = list.map(([n, a]) =>
  `<div class="h-[23px] flex items-center"><span class="ml-[2px] w-[23px] h-[22px] flex items-center justify-center ${a === 'on' ? 'rounded-[3px] border border-[#8a7ab0] bg-[#d6d4da]' : ''}">${icon(n, 'w-[15px] h-[15px]')}</span>${a && a !== 'on' ? `<svg class="ml-[4px] w-[7px] h-2 ${a === 'v' ? 'text-black' : 'text-[#bbb]'}"><use href="#dn"/></svg>` : ''}</div>`).join('');
side('side1', [['cursor','on'],['info','v'],['zoom','v'],['ruler','v'],['move'],['resize'],['mirror'],['snap'],['via'],['split'],['jog'],['copyx'],['copyp'],['spread'],['dist'],['poly'],['newl','v'],['newr','v'],['del','v']]);
side('side2', [['lock','g'],['unlock'],['plan'],['penx'],['penc']]);
side('side3', [['sqx'],['sq','g']]);
side('side4', [['rot','g'],['align','g'],['origin','g']]);

// power density values
const V = `119.03 459.18 460.64 571.88 887.73 352.39 2265.2 846.74 4913
190.49 823.68 1544.5 629.46 1739.3 505.75 895.16 1522.8 2743
136.11 9295.5 1.2206e+05 1443.7 790.89 515.31 421.6 1032.4 3609.8
2390.7 729.05 564.81 556.04 1747.1 585.99 511.2 867.29 3268.5
33667 6594.8 602.94 810.46 4920.3 15707 4949.4 3999.5 4101.8
642.01 2531.4 34079 2667 29958 7994.6 2748.7 3024.1 3411.3
1286.5 4309.2 39518 941.59 30669 1374.5 717.95 626.24 646.98
889.71 4749.9 5140.8 1399.5 3475 6865.7 1814.1 499.06 485.11
522.04 1801.9 2282.3 247.05 201.88 3965 572.44 207.87 251.58`.split(/\s+/);
const tone = v => v > 109853 ? 'bg-[#ff0000]' : v > 36618 ? 'bg-[#006cb4]' : v > 24412 ? 'bg-[#003ca0]' : v > 12206 ? 'bg-[#312c64]' : '';
$('heat').innerHTML = V.map(v => `<div class="flex items-center justify-center pt-[2px] ${tone(+v)}">${v}</div>`).join('');

// histogram
const H = [['bg-[#ff0000]',1,3],['bg-[#de9600]',0,0],['bg-[#ffcb38]',0,0],['bg-[#22c44c]',0,0],['bg-[#008c22]',0,0],['bg-[#006c6c]',0,0],['bg-[#006cb4]',1,3],['bg-[#003ca0]',4,10],['bg-[#312c64]',1,3],['bg-[#14124f]',74,184]];
$('hrow').innerHTML = H.map(([c, n, w]) => `<div class="h-[23px] flex items-start"><i class="w-5 h-5 ${c}"></i><span class="w-[21px] mt-[2px] text-right">${n}</span><i class="ml-1 mt-[2px] h-4 ${c}" style="width:${w}px"></i></div>`).join('');
$('hchk').innerHTML = H.map(() => '<div class="h-[23px] pt-[4px]"><svg class="block w-[14px] h-[14px]" viewBox="0 0 14 14"><rect x=".5" y=".5" width="13" height="13" rx="2.500" fill="none" stroke="#777"/><path d="M3.500 7l2.500 3 4.500-6.500" fill="none" stroke="#fff" stroke-width="2"/></svg></div>').join('');
$('hlab').innerHTML = [122059,109853,97647,85441,73235,61029,48823,36618,24412,12206,0].map((v, i) => `<div class="h-[23px] ${i && i < 10 ? '[-webkit-text-stroke:0.4px_white]' : ''}">${v}</div>`).join('');

// dock tabs
$('docks').innerHTML = [['View Settings','eye','h-[153px]'],['Property Editor','prop','h-[164px]'],['Favorites','star','h-[125px]'],['Tasks','task','h-[101px]'],['Map Mode','map','h-[133px]']].map(([t, n, h]) =>
  `<div class="${h} ${n === 'map' ? 'w-[25px] border-b' : 'w-6 border-l border-t bg-[#c4c4c4]'} border-r border-[#999] rounded-r-[3px] flex flex-col items-center pt-2 pb-[10px]">${icon(n, 'w-[15px] h-4')}<span class="grow pt-[10px] [writing-mode:vertical-rl] leading-[22px] mr-[2px]">${t}</span>${icon('close', 'w-[10px] h-[10px] mr-[5px]')}</div>`).join('');

// task list buttons
$('tasks').innerHTML = [['ff','[Course: Advanced-Digital...'],['cab','[rtl]'],['impress','[Lab8_CND211.pptx - Lib...'],['xterm','[vlsi@elc-auc-vlsi-28-lnx:...'],['xterm','[vlsi@elc-auc-vlsi-28-lnx:...'],['xterm','[vlsi@elc-auc-vlsi-28-lnx:...'],['chipbig','IC Compiler II - BlockWin...'],['cab','script']].map(([n, t], i) =>
  `<div class="w-[200px] h-[31px] rounded-[3px] border border-[#bbb] flex items-center pl-[6px] ${i === 6 ? 'bg-[#c9c9c9]' : 'bg-[#efefef]'}">${icon(n, 'w-[22px] h-[22px] ' + (i < 6 ? 'opacity-80' : ''))}<span class="ml-[6px] tracking-[-0.3px] ${i < 6 ? 'text-[#8a8c8c]' : ''}">${t}</span></div>`).join('');

// power ring layout drawing
const rect = (x, y, w, h, f, s) => `<rect x="${x + .5}" y="${y + .5}" width="${w - 1}" height="${h - 1}" fill="${f}" ${s ? `stroke="${s}"` : ''}/>`;
const P = '#b070b0', B = '#7474b4', M = '#7c2f88', G = '#00b000';
let s = '<rect x="416.5" y="182.5" width="789" height="787" fill="none" stroke="#5c5c5c"/>';
const vx = (x, y, h, w = 18) => s += rect(x, y, w, h, 'url(#pb)', B) + `<path d="M${x + Math.floor(w / 2) + .5} ${y}v${h}" stroke="${B}"/>`;
const hx = (x, y, w) => s += rect(x, y, w, 18, 'url(#pp)', P) + `<path d="M${x} ${y + 9.500}h${w}" stroke="${P}"/>`;
const via = (x, y, w = 18) => s += rect(x, y, w, 18, 'url(#pm)', P) + `<rect x="${x + 3}" y="${y + 2}" width="${w - 6}" height="14" fill="url(#pg)"/>`;
const blank = (x, y, w = 18) => s += `<rect x="${x}" y="${y}" width="${w}" height="18" fill="url(#pm)"/><path d="M${x} ${y + .5}h${w}M${x} ${y + 17.500}h${w}M${x} ${y + 9.500}h${w}" stroke="${P}"/>`;
vx(430, 196, 50); vx(1173, 196, 760, 19); vx(1151, 219, 714);
const OX = [507,550,678,721,849,892,1020,1063];
OX.forEach(x => vx(x, 196, 45));
hx(430, 196, 762); hx(453, 219, 716); hx(1140, 938, 52);
[430, ...OX].forEach(x => via(x, 196)); via(1173, 196, 19);
OX.forEach(x => blank(x, 219));
[453,593,636,764,807,935,978,1106,1151].forEach(x => via(x, 219));
[305,348,476,519,647,690,818,861].forEach(y => { hx(1151, y, 41); blank(1151, y); via(1173, y, 19); });
[262,390,433,561,604,732,775,915].forEach(y => via(1151, y));
via(1173, 938, 19);
s += `<g fill="none" stroke="${M}">`;
[528,560,571,580,593,692].forEach(y => s += `<path d="M1199.5 ${y + .5}h10v10h-10zM1202 ${y + 3}h3v5h-3M1205.500 ${y + 2}v7M${y === 528 ? 1205 : y === 692 ? 1192 : 1155} ${y + 5.500}H1202"/>`);
s += '<path d="M1169 540.500h30v-8"/>';
[481,489,503,513,560,566,579,674,728,757,838,849,860,922].forEach(y => s += `<path d="M417 ${y + .5}h-4v10h4M415 ${y + 3}v5"/>`);
s += `</g><path d="M883.5 231V186.500H895" fill="none" stroke="#a0208c"/><g fill="none" stroke="${G}"><path d="M891.500 178.500h10v10h-10zM895.500 181v5h3v-5z"/>`;
[698,779,811,820,829,838,847,856,864,880,891,901,911].forEach(x => s += `<path d="M${x + .5} 969v4.500h9V969M${x + 3} 971h4"/>`);
s += '</g><path d="M411.500 964.500h9v10h-9zM415 967h2v6h2" fill="none" stroke="#00a8a8"/>';
s += '<g font-size="13" fill="none" stroke="#8d6aa4" stroke-width=".8"><text x="793" y="210" textLength="36">GVSS</text><text x="791" y="233" textLength="38">GVDD</text></g><g font-size="13" fill="none" stroke="#7070a8" stroke-width=".8"><text transform="translate(1187 594) rotate(-90)" textLength="36">GVSS</text><text transform="translate(1165 595) rotate(-90)" textLength="38">GVDD</text></g>';
$('layout').insertAdjacentHTML('beforeend', s);
</script>
</body>
</html>
